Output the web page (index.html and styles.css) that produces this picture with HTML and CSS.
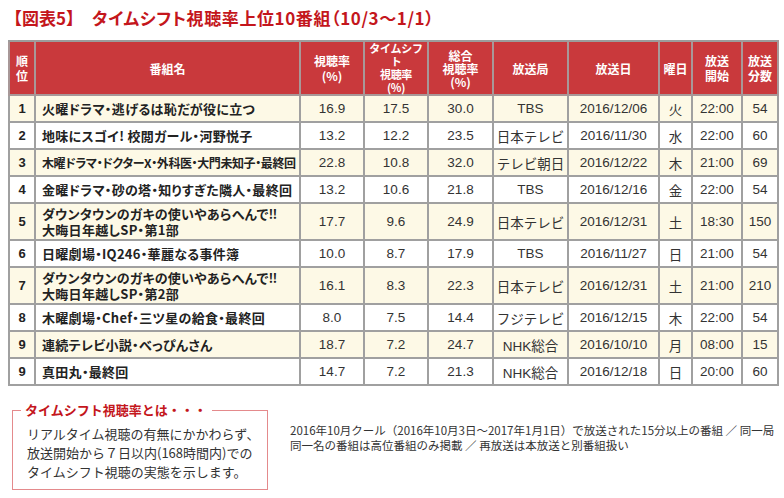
FILE: index.html
```html
<!DOCTYPE html>
<html lang="ja">
<head>
<meta charset="utf-8">
<link rel="stylesheet" href="styles.css">
</head>
<body>
<div class="page">
  <h1 class="title"><span class="fig">【図表5】</span><span class="main">タイムシフト視聴率上位10番組（10/3〜1/1）</span></h1>
  <table class="rank">
    <colgroup>
      <col class="c-rank"><col class="c-name"><col class="c-num"><col class="c-num"><col class="c-num2"><col class="c-st"><col class="c-date"><col class="c-day"><col class="c-start"><col class="c-min">
    </colgroup>
    <thead>
      <tr>
        <th class="two">順<br>位</th>
        <th>番組名</th>
        <th class="two">視聴率<br>(%)</th>
        <th class="tiny">タイムシフト<br>視聴率<br>(%)</th>
        <th>総合<br>視聴率<br>(%)</th>
        <th>放送局</th>
        <th>放送日</th>
        <th>曜日</th>
        <th class="two">放送<br>開始</th>
        <th class="two">放送<br>分数</th>
      </tr>
    </thead>
    <tbody>
      <tr class="odd"><td class="r">1</td><td class="n">火曜ドラマ・逃げるは恥だが役に立つ</td><td>16.9</td><td>17.5</td><td>30.0</td><td>TBS</td><td>2016/12/06</td><td>火</td><td>22:00</td><td>54</td></tr>
      <tr><td class="r">2</td><td class="n">地味にスゴイ! 校閲ガール・河野悦子</td><td>13.2</td><td>12.2</td><td>23.5</td><td>日本テレビ</td><td>2016/11/30</td><td>水</td><td>22:00</td><td>60</td></tr>
      <tr class="odd"><td class="r">3</td><td class="n sq">木曜ドラマ・ドクターX・外科医・大門未知子・最終回</td><td>22.8</td><td>10.8</td><td>32.0</td><td>テレビ朝日</td><td>2016/12/22</td><td>木</td><td>21:00</td><td>69</td></tr>
      <tr><td class="r">4</td><td class="n">金曜ドラマ・砂の塔・知りすぎた隣人・最終回</td><td>13.2</td><td>10.6</td><td>21.8</td><td>TBS</td><td>2016/12/16</td><td>金</td><td>22:00</td><td>54</td></tr>
      <tr class="odd tall"><td class="r">5</td><td class="n">ダウンタウンのガキの使いやあらへんで‼<br>大晦日年越しSP・第1部</td><td>17.7</td><td>9.6</td><td>24.9</td><td>日本テレビ</td><td>2016/12/31</td><td>土</td><td>18:30</td><td>150</td></tr>
      <tr><td class="r">6</td><td class="n">日曜劇場・IQ246・華麗なる事件簿</td><td>10.0</td><td>8.7</td><td>17.9</td><td>TBS</td><td>2016/11/27</td><td>日</td><td>21:00</td><td>54</td></tr>
      <tr class="odd tall"><td class="r">7</td><td class="n">ダウンタウンのガキの使いやあらへんで‼<br>大晦日年越しSP・第2部</td><td>16.1</td><td>8.3</td><td>22.3</td><td>日本テレビ</td><td>2016/12/31</td><td>土</td><td>21:00</td><td>210</td></tr>
      <tr><td class="r">8</td><td class="n">木曜劇場・Chef・三ツ星の給食・最終回</td><td>8.0</td><td>7.5</td><td>14.4</td><td>フジテレビ</td><td>2016/12/15</td><td>木</td><td>22:00</td><td>54</td></tr>
      <tr class="odd"><td class="r">9</td><td class="n">連続テレビ小説・べっぴんさん</td><td>18.7</td><td>7.2</td><td>24.7</td><td>NHK総合</td><td>2016/10/10</td><td>月</td><td>08:00</td><td>15</td></tr>
      <tr><td class="r">9</td><td class="n">真田丸・最終回</td><td>14.7</td><td>7.2</td><td>21.3</td><td>NHK総合</td><td>2016/12/18</td><td>日</td><td>20:00</td><td>60</td></tr>
    </tbody>
  </table>
  <div class="bottom">
    <div class="defbox">
      <div class="deftitle">タイムシフト視聴率とは・・・</div>
      <p class="deftext">リアルタイム視聴の有無にかかわらず、<br>放送開始から７日以内(168時間内)での<br>タイムシフト視聴の実態を示します。</p>
    </div>
    <p class="notes">2016年10月クール（2016年10月3日〜2017年1月1日）で放送された15分以上の番組 ／ 同一局<br>同一名の番組は高位番組のみ掲載 ／ 再放送は本放送と別番組扱い</p>
  </div>
</div>
</body>
</html>
```

FILE: styles.css
```css
* { box-sizing: border-box; }
html, body { margin: 0; padding: 0; background: #fff; }
body {
  font-family: "Liberation Sans", "Noto Sans CJK JP", sans-serif;
  color: #222;
}
.page {
  width: 784px;
  height: 498px;
  padding: 6px 7px 0 8px;
}
.title {
  margin: 0 0 0 -3px;
  height: 34px;
  font-size: 17px;
  font-weight: bold;
  color: #c4161c;
  line-height: 24px;
  display: flex;
  align-items: center;
  padding-bottom: 10px;
  font-family: "Noto Sans CJK JP", sans-serif;
}
.title .fig { width: 87px; }
.title .main { letter-spacing: 0.6px; font-feature-settings: "palt"; }

.rank {
  border-collapse: collapse;
  width: 769px;
  table-layout: fixed;
  border: 2px solid #9c9c9c;
}
.c-rank { width: 26px; }
.c-name { width: 265px; }
.c-num { width: 64px; }
.c-num2 { width: 65px; }
.c-st { width: 75px; }
.c-date { width: 91px; }
.c-day { width: 33px; }
.c-start { width: 50px; }
.c-min { width: 36px; }

.rank th {
  background: #c9393c;
  color: #fff;
  font-family: "Noto Sans CJK JP", sans-serif;
  font-weight: bold;
  font-size: 12px;
  line-height: 13px;
  height: 44px;
  padding: 0;
  border: 2px solid #a89898;
  border-top: 2px solid #9c9c9c;
  text-align: center;
}
.rank th.two { line-height: 15px; }
.rank th.tiny { font-size: 11px; letter-spacing: -0.3px; }
.rank td {
  border: 2px solid #a0a0a0;
  height: 27px;
  padding: 0;
  text-align: center;
  font-size: 13.5px;
  color: #333;
  white-space: nowrap;
}
.rank tr.odd td { background: #fdf9e6; }
.rank tr.tall td { height: 37px; }
.rank td.r {
  font-weight: bold;
  color: #222;
  font-size: 13px;
}
.rank td.n {
  text-align: left;
  padding-left: 6px;
  font-family: "Noto Sans CJK JP", sans-serif;
  font-weight: bold;
  font-size: 13px;
  line-height: 16px;
  color: #222;
  font-feature-settings: "palt";
  letter-spacing: 0.3px;
}
.rank td.sq { font-size: 12px; letter-spacing: -0.4px; }

.bottom {
  display: flex;
  margin-top: 24px;
  padding-left: 4px;
}
.defbox {
  position: relative;
  width: 256px;
  height: 80px;
  border: 1.5px solid #e48a8c;
  padding: 13px 0 0 14px;
  font-family: "Noto Sans CJK JP", sans-serif;
}
.deftitle {
  position: absolute;
  top: -11px;
  left: 8px;
  background: #fff;
  padding: 0 5px 0 4px;
  color: #c4161c;
  font-weight: bold;
  font-size: 13px;
  line-height: 20px;
}
.deftext {
  margin: 0;
  font-size: 13px;
  line-height: 19px;
  color: #333;
}
.notes {
  margin: 13px 0 0 22px;
  font-family: "Noto Sans CJK JP", sans-serif;
  font-size: 11.5px;
  line-height: 15px;
  color: #333;
  white-space: nowrap;
}
```
